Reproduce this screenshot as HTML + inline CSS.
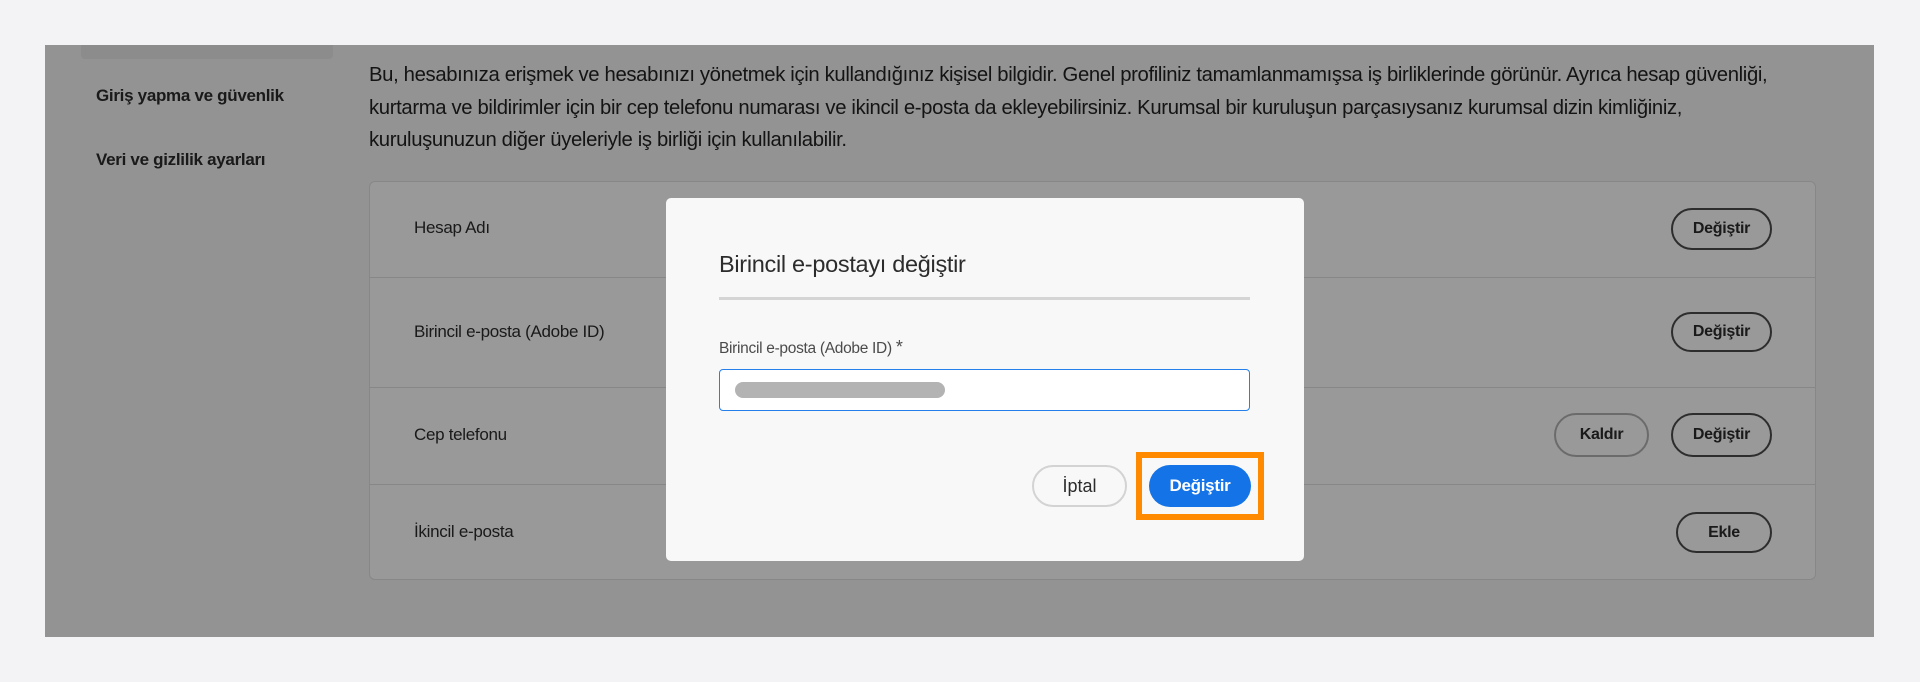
<!DOCTYPE html>
<html><head><meta charset="utf-8"><style>
*{box-sizing:border-box;margin:0;padding:0}
body{width:1920px;height:682px;background:#f3f2f5;position:relative;overflow:hidden;font-family:"Liberation Sans",sans-serif;color:#2c2c2c}
.abs{position:absolute}
.frame{left:45px;top:45px;width:1829px;height:592px;background:#f5f5f5;overflow:hidden}
.side{font-size:17px;font-weight:bold;color:#2c2c2c;letter-spacing:-0.3px}
.para{left:324px;top:14px;font-size:20.3px;line-height:32.5px;width:1520px;letter-spacing:-0.35px;color:#222;white-space:nowrap}
.card{left:324px;top:136px;width:1447px;height:399px;background:#fff;border:1px solid #e1e1e1;border-radius:6px}
.row{position:absolute;left:0;width:100%;border-bottom:1px solid #e1e1e1}
.lbl{position:absolute;left:44px;font-size:17px;letter-spacing:-0.3px;color:#2c2c2c}
.btn{position:absolute;border:2px solid #4b4b4b;border-radius:22px;font-size:16px;font-weight:bold;display:flex;align-items:center;justify-content:center;color:#2c2c2c;letter-spacing:-0.3px}
.ov{left:0;top:0;width:1829px;height:592px;background:rgba(0,0,0,0.4)}
.modal{left:666px;top:198px;width:638px;height:363px;background:#f8f8f8;border-radius:5px}
</style></head><body>
<div class="abs frame">
  <div class="abs" style="left:36px;top:0;width:252px;height:14px;background:#eaeaea;border-radius:0 0 4px 4px"></div>
  <div class="abs side" style="left:51px;top:41px">Giriş yapma ve güvenlik</div>
  <div class="abs side" style="left:51px;top:105px">Veri ve gizlilik ayarları</div>
  <div class="abs para">Bu, hesabınıza erişmek ve hesabınızı yönetmek için kullandığınız kişisel bilgidir. Genel profiliniz tamamlanmamışsa iş birliklerinde görünür. Ayrıca hesap güvenliği,<br>kurtarma ve bildirimler için bir cep telefonu numarası ve ikincil e-posta da ekleyebilirsiniz. Kurumsal bir kuruluşun parçasıysanız kurumsal dizin kimliğiniz,<br>kuruluşunuzun diğer üyeleriyle iş birliği için kullanılabilir.</div>
  <div class="abs card">
    <div class="row" style="top:0;height:96px"></div>
    <div class="row" style="top:96px;height:110px"></div>
    <div class="row" style="top:206px;height:97px"></div>
    <div class="lbl" style="top:36px">Hesap Adı</div>
    <div class="lbl" style="top:140px">Birincil e-posta (Adobe ID)</div>
    <div class="lbl" style="top:243px">Cep telefonu</div>
    <div class="lbl" style="top:340px">İkincil e-posta</div>
    <div class="btn" style="left:1301px;top:26px;width:101px;height:42px">Değiştir</div>
    <div class="btn" style="left:1301px;top:130px;width:101px;height:40px">Değiştir</div>
    <div class="btn" style="left:1184px;top:231px;width:95px;height:44px;border-color:#b3b3b3">Kaldır</div>
    <div class="btn" style="left:1301px;top:231px;width:101px;height:44px">Değiştir</div>
    <div class="btn" style="left:1306px;top:330px;width:96px;height:41px">Ekle</div>
  </div>
  <div class="abs ov"></div>
</div>
<div class="abs modal">
  <div class="abs" style="left:53px;top:53px;font-size:23.5px;color:#2c2c2c;letter-spacing:-0.3px">Birincil e-postayı değiştir</div>
  <div class="abs" style="left:53px;top:99px;width:531px;height:3px;background:#d5d5d5"></div>
  <div class="abs" style="left:53px;top:139px;font-size:15.5px;color:#4b4b4b;letter-spacing:-0.3px">Birincil e-posta (Adobe ID) <span style="font-size:18px">*</span></div>
  <div class="abs" style="left:53px;top:171px;width:531px;height:42px;background:#fff;border:1px solid #2680eb;border-radius:4px"></div>
  <div class="abs" style="left:69px;top:184px;width:210px;height:16px;background:#b3b3b3;border-radius:8px"></div>
  <div class="abs" style="left:366px;top:267px;width:95px;height:42px;border:2px solid #d3d3d3;border-radius:22px;background:#f8f8f8;font-size:18px;display:flex;align-items:center;justify-content:center;color:#2c2c2c">İptal</div>
  <div class="abs" style="left:470px;top:254px;width:128px;height:68px;border:6px solid #ff8a00"></div>
  <div class="abs" style="left:483px;top:267px;width:102px;height:42px;background:#1473e6;border-radius:22px;font-size:17px;font-weight:bold;color:#fff;display:flex;align-items:center;justify-content:center;letter-spacing:-0.3px">Değiştir</div>
</div>
</body></html>
